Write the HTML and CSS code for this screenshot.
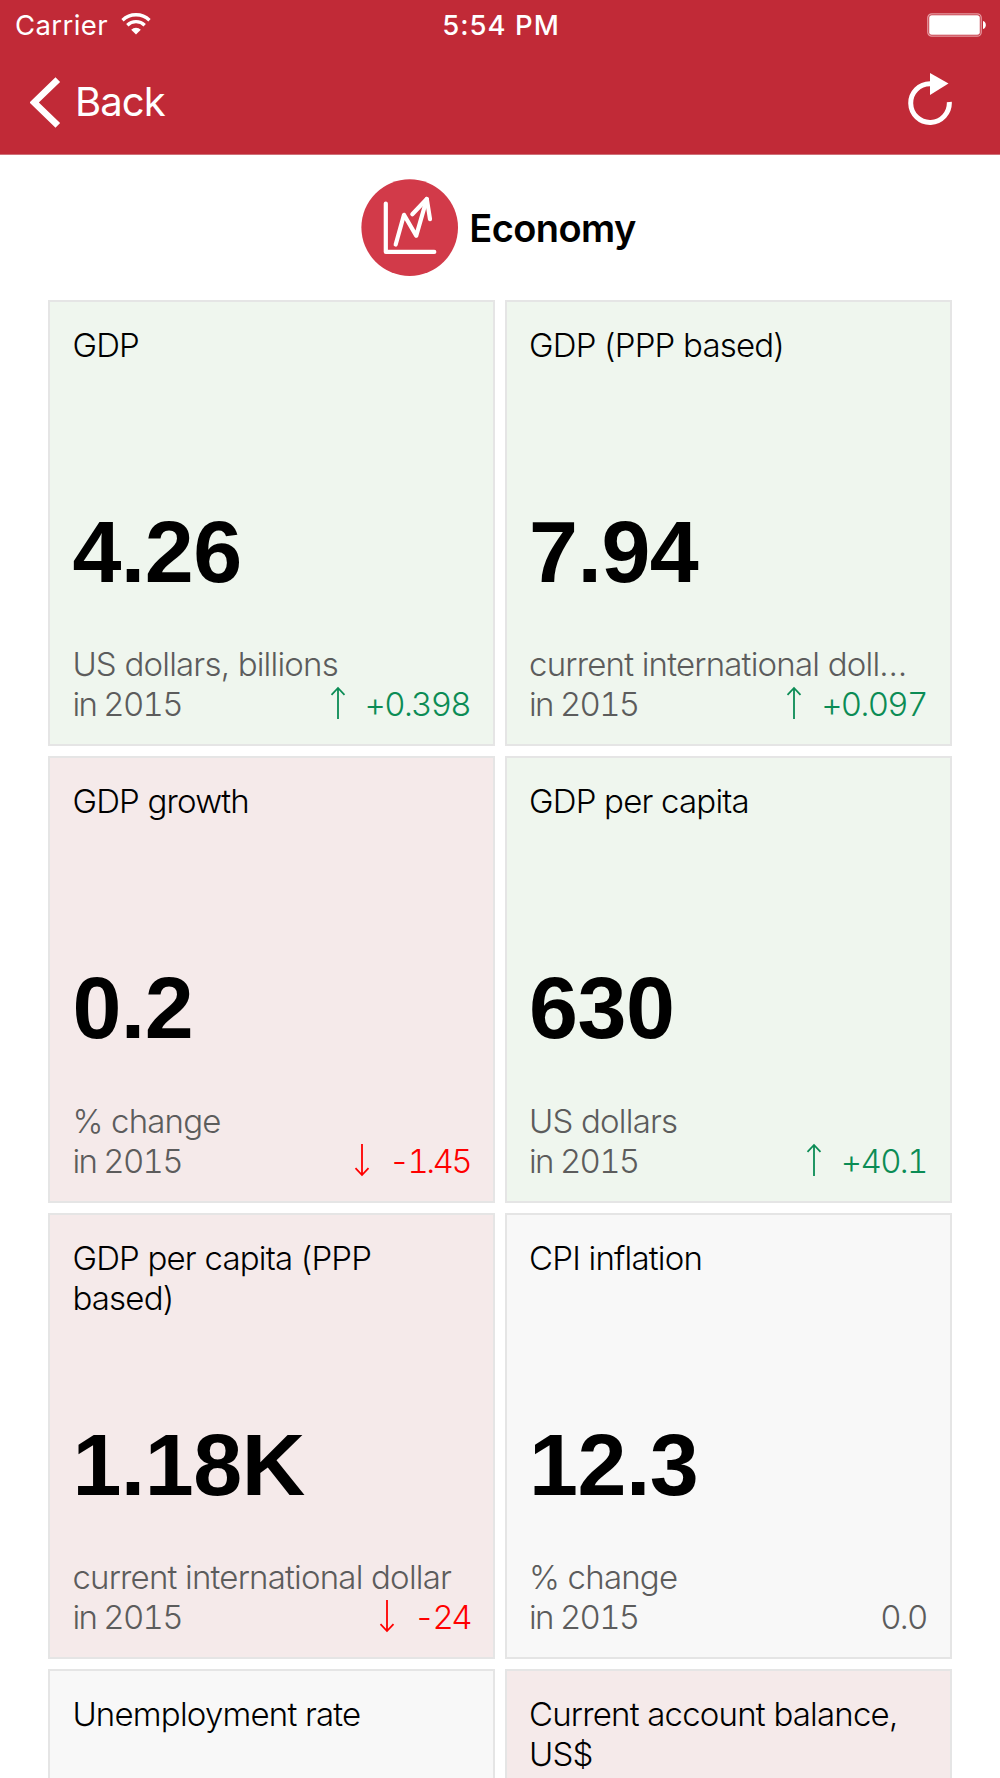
FILE: index.html
```html
<!DOCTYPE html>
<html lang="en">
<head>
    <meta charset="UTF-8">
    <meta name="viewport" content="width=device-width, initial-scale=1.0">
    <title>Economy</title>
    <link rel="stylesheet" href="styles.css">
</head>
<body>
    <header>
        <div class="status-bar">
            <div class="carrier">
                <span>Carrier</span>
                <svg class="wifi" width="30" height="22" viewBox="0 0 30 22">
                    <path d="M1.5 7.2a19.4 19.4 0 0 1 27 0M6.3 12.2a12.4 12.4 0 0 1 17.4 0" fill="none" stroke="#fff" stroke-width="3.3"/>
                    <path d="M15 21.5l-4.8-4.7a6.8 6.8 0 0 1 9.6 0z" fill="#fff"/>
                </svg>
            </div>
            <div class="time">5:54 PM</div>
            <div class="battery-side">
                <svg width="60" height="24" viewBox="0 0 60 24">
                    <rect x="0.8" y="0.8" width="53.4" height="22.4" rx="4" fill="none" stroke="#e59aa1" stroke-width="1.3"/>
                    <rect x="2.2" y="2.2" width="50.6" height="19.6" rx="2.5" fill="#fff"/>
                    <path d="M56 8c3.8 1 3.8 7 0 8z" fill="#fff"/>
                </svg>
            </div>
        </div>
        <nav class="nav-bar">
            <a class="back">
                <svg width="31" height="51" viewBox="0 0 31 51">
                    <path d="M27.8 2.6L4.2 25.5l23.6 22.9" fill="none" stroke="#fff" stroke-width="6.6"/>
                </svg>
                <span>Back</span>
            </a>
            <svg class="refresh" width="44" height="53" viewBox="0 0 44 53">
                <path d="M22 10.8a19.3 19.3 0 1 0 19.3 18.2" fill="none" stroke="#fff" stroke-width="5"/>
                <path d="M22 0v22l18.5-11.4z" fill="#fff"/>
            </svg>
        </nav>
    </header>

    <div class="section-title">
        <svg width="98" height="98" viewBox="0 0 98 98">
            <circle cx="48.7" cy="48.6" r="48.3" fill="#d23a49"/>
            <g fill="none" stroke="#fff" stroke-width="4.2" stroke-linecap="round" stroke-linejoin="round">
                <path d="M24.8 24.5v48.4h48.5"/>
                <path d="M34.7 65.5L43 35.8l12.2 21L65.8 20"/>
                <path d="M51.3 35.3L65.8 20l3.2 20.2"/>
            </g>
        </svg>
        <h1>Economy</h1>
    </div>

    <main class="cards">
        <div class="card good">
            <h2>GDP</h2>
            <div class="value">4.26</div>
            <div class="unit">US dollars, billions</div>
            <div class="row">
                <span>in 2015</span>
                <span class="change up"><svg class="arrow" viewBox="0 0 16 34"><path d="M8 33V2M1.5 8.8L8 2l6.5 6.8"/></svg>+0.398</span>
            </div>
        </div>
        <div class="card good">
            <h2>GDP (PPP based)</h2>
            <div class="value">7.94</div>
            <div class="unit">current international doll…</div>
            <div class="row">
                <span>in 2015</span>
                <span class="change up"><svg class="arrow" viewBox="0 0 16 34"><path d="M8 33V2M1.5 8.8L8 2l6.5 6.8"/></svg>+0.097</span>
            </div>
        </div>
        <div class="card bad">
            <h2>GDP growth</h2>
            <div class="value">0.2</div>
            <div class="unit">% change</div>
            <div class="row">
                <span>in 2015</span>
                <span class="change down"><svg class="arrow" viewBox="0 0 16 34"><path d="M8 1v31M1.5 25.2L8 32l6.5-6.8"/></svg>-1.45</span>
            </div>
        </div>
        <div class="card good">
            <h2>GDP per capita</h2>
            <div class="value">630</div>
            <div class="unit">US dollars</div>
            <div class="row">
                <span>in 2015</span>
                <span class="change up"><svg class="arrow" viewBox="0 0 16 34"><path d="M8 33V2M1.5 8.8L8 2l6.5 6.8"/></svg>+40.1</span>
            </div>
        </div>
        <div class="card bad">
            <h2>GDP per capita (PPP<br>based)</h2>
            <div class="value">1.18K</div>
            <div class="unit">current international dollar</div>
            <div class="row">
                <span>in 2015</span>
                <span class="change down"><svg class="arrow" viewBox="0 0 16 34"><path d="M8 1v31M1.5 25.2L8 32l6.5-6.8"/></svg>-24</span>
            </div>
        </div>
        <div class="card">
            <h2>CPI inflation</h2>
            <div class="value">12.3</div>
            <div class="unit">% change</div>
            <div class="row">
                <span>in 2015</span>
                <span class="change">0.0</span>
            </div>
        </div>
        <div class="card cut">
            <h2>Unemployment rate</h2>
        </div>
        <div class="card bad cut">
            <h2>Current account balance,<br>US$</h2>
        </div>
    </main>
</body>
</html>
```
FILE: styles.css
```css
* { box-sizing: border-box; }
body { display: flex; flex-direction: column; font-family: Inter, "Liberation Sans", sans-serif; margin: 0; height: 1778px; background: #fff; color: #000; }
svg { display: block; flex: none; }

header { background: #c12a37; color: #fff; height: 155px; border-bottom: 1px solid #cf7078; }
.status-bar { display: grid; grid-template-columns: 1fr auto 1fr; height: 50px; padding: 0 13px 0 15px; font-size: 27.5px; line-height: 50px; }
.carrier { display: flex; gap: 13px; letter-spacing: 0.4px; }
.wifi { margin-top: 13px; }
.time { font-weight: 500; letter-spacing: 1px; }
.battery-side { display: flex; justify-content: flex-end; padding-top: 13px; }
.nav-bar { display: flex; justify-content: space-between; padding: 23px 48px 0 30px; }
.back { display: flex; align-items: center; height: 58px; gap: 14px; font-size: 40px; line-height: 46px; letter-spacing: -0.9px; }

.section-title { display: flex; align-items: center; justify-content: center; gap: 10px; height: 145px; padding: 0 3px 0 0; }
.section-title h1 { margin: 0; font-size: 38px; font-weight: 600; letter-spacing: -0.6px; }

.cards { flex: 1; min-height: 0; display: grid; grid-template-columns: 1fr 1fr; grid-template-rows: repeat(3, 446.4px) 1fr; gap: 10px; padding: 0 48.4px; }
.card { display: flex; flex-direction: column; padding: 23px 23px 20px 22px; border: 2px solid #e5e5e5; background: #f8f8f8; font-size: 33px; font-weight: 300; line-height: 40px; letter-spacing: -0.8px; }
.card.good { background: #eff6ee; }
.card.bad { background: #f5eaea; }
/* last row runs off the screen */
.card.cut { padding-bottom: 0; border-bottom: none; }
.card h2 { margin: 0; height: 80px; font-size: inherit; font-weight: inherit; }
.value { margin: 97px 0 auto; font: bold 88px/100px "Liberation Sans", Arial, sans-serif; letter-spacing: -0.5px; }
.unit, .row { color: #5c5c5c; white-space: nowrap; }
.row { display: flex; justify-content: space-between; font-variant-numeric: tabular-nums; letter-spacing: -1.7px; }
.change { display: flex; }
.up { color: #0b8c55; }
.down { color: #f00; letter-spacing: -2.6px; }
.arrow { width: 16px; height: 34px; margin: 2px 19px 0 0; fill: none; stroke: currentColor; stroke-width: 1.8; }
```
